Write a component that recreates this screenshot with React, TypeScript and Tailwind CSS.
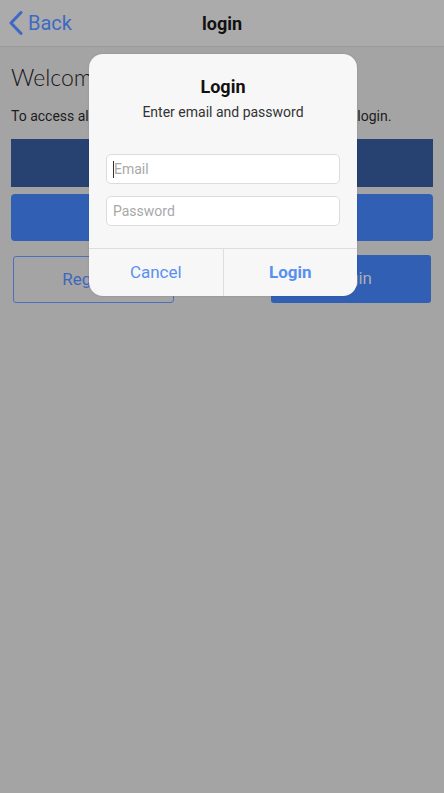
export default function App() {
  return (
    <div
      className="relative w-[444px] h-[793px] overflow-hidden bg-[#a5a4a5]"
      style={{ fontFamily: 'Roboto, "Liberation Sans", sans-serif' }}
    >
      {/* header, dimmed by the modal backdrop */}
      <header className="h-[47px] bg-[#ababab] border-b border-[#9a9a9a] flex items-center relative">
        <div className="flex items-center pl-[8px] text-[#3d69c4]">
          <svg width="16" height="24" viewBox="0 0 16 24" fill="none" className="mr-[4px]">
            <path d="M13 1.5 L3 12 L13 22.5" stroke="currentColor" strokeWidth="3" strokeLinecap="round" strokeLinejoin="round" />
          </svg>
          <span className="text-[20px]">Back</span>
        </div>
        <h1 className="absolute inset-x-0 text-center text-[18px] font-bold text-[#111] pointer-events-none">
          login
        </h1>
      </header>

      <main className="px-[11px]">
        <h2
          className="mt-[16px] text-[23px] font-light text-[#151515] leading-[28px] whitespace-nowrap"
          style={{ fontFamily: 'Lato, "Open Sans", sans-serif' }}
        >
          Welcome to the community
        </h2>
        <p className="mt-[15px] text-[14px] text-[#1c1c1c] leading-[20px] whitespace-nowrap">
          To access all the features of this app, please register or login.
        </p>
        <div className="mt-[13px] h-[48px] bg-[#274271]" />
        <div className="mt-[7px] h-[47px] bg-[#315fb3] rounded-[4px]" />
        <div className="mt-[15px] flex justify-between px-[2px]">
          <button className="w-[161px] h-[47px] border border-[#4c70bd] rounded-[3px] text-[17px] text-[#3d67bd]">
            Register
          </button>
          <button className="w-[160px] h-[48px] bg-[#315fb3] rounded-[3px] text-[17px] text-[#a9adb8] -mt-[1px]">
            Login
          </button>
        </div>
      </main>

      {/* login dialog */}
      <div className="absolute left-[89px] top-[54px] w-[268px] bg-[#f7f7f7] rounded-[14px] shadow-[0_0_2px_rgba(0,0,0,0.15)] overflow-hidden">
        <div className="px-[17px] pt-[21px] pb-[22px]">
          <div className="text-center text-[18px] font-bold text-[#111] leading-[24px]">Login</div>
          <div className="mt-[3px] text-center text-[14px] text-[#333] leading-[20px]">
            Enter email and password
          </div>
          <div className="mt-[32px] flex flex-col gap-[12px]">
            <div className="h-[30px] bg-white border border-[#dcdcdc] rounded-[5px] flex items-center px-[6px]">
              <span className="w-[1px] h-[17px] bg-[#333]" />
              <span className="text-[14px] text-[#a8a8a8]">Email</span>
            </div>
            <div className="h-[30px] bg-white border border-[#dcdcdc] rounded-[5px] flex items-center px-[6px]">
              <span className="text-[14px] text-[#a8a8a8]">Password</span>
            </div>
          </div>
        </div>
        <div className="flex border-t border-[#dedede] h-[48px]">
          <button className="flex-1 text-[17px] text-[#5790f3]">Cancel</button>
          <div className="w-[1px] bg-[#dedede]" />
          <button className="flex-1 text-[17px] font-bold text-[#5790f3]">Login</button>
        </div>
      </div>
    </div>
  )
}
